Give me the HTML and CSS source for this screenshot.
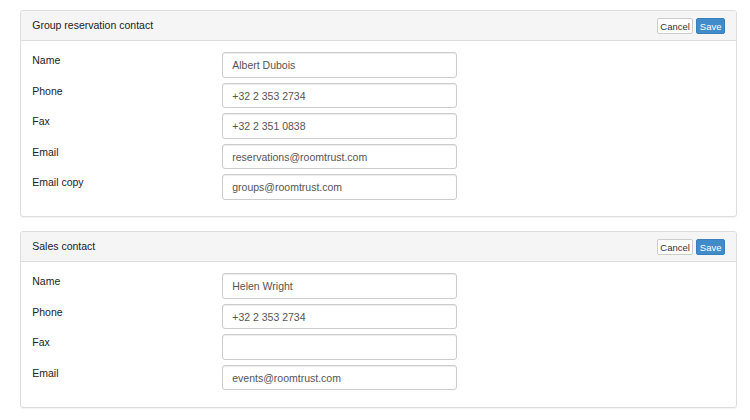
FILE: index.html
```html
<!DOCTYPE html>
<html lang="en">

<head>
    <title>Contacts</title>
    <link rel="stylesheet" href="styles.css">
</head>

<body>
    <div class="panel">
        <div class="panel-heading">
            <span class="panel-title">Group reservation contact</span>
            <div class="actions">
                <button class="btn">Cancel</button>
                <button class="btn btn-primary">Save</button>
            </div>
        </div>
        <div class="panel-body">
            <div class="row">
                <label>Name</label>
                <input type="text" value="Albert Dubois">
            </div>
            <div class="row">
                <label>Phone</label>
                <input type="text" value="+32 2 353 2734">
            </div>
            <div class="row">
                <label>Fax</label>
                <input type="text" value="+32 2 351 0838">
            </div>
            <div class="row">
                <label>Email</label>
                <input type="text" value="reservations@roomtrust.com">
            </div>
            <div class="row">
                <label>Email copy</label>
                <input type="text" value="groups@roomtrust.com">
            </div>
        </div>
    </div>

    <div class="panel">
        <div class="panel-heading">
            <span class="panel-title">Sales contact</span>
            <div class="actions">
                <button class="btn">Cancel</button>
                <button class="btn btn-primary">Save</button>
            </div>
        </div>
        <div class="panel-body">
            <div class="row">
                <label>Name</label>
                <input type="text" value="Helen Wright">
            </div>
            <div class="row">
                <label>Phone</label>
                <input type="text" value="+32 2 353 2734">
            </div>
            <div class="row">
                <label>Fax</label>
                <input type="text" value="">
            </div>
            <div class="row">
                <label>Email</label>
                <input type="text" value="events@roomtrust.com">
            </div>
        </div>
    </div>
</body>

</html>
```

FILE: styles.css
```css
body {
    margin: 10px 13px 0 20px;
    font-family: "Liberation Sans", Arial, sans-serif;
    font-size: 10.5px;
    color: #333;
    background-color: #fff;
}

.panel {
    border: 1px solid #ddd;
    border-radius: 3px;
    margin-bottom: 14px;
    box-shadow: 0 1px 1px rgba(0, 0, 0, 0.05);
}

.panel-heading {
    display: flex;
    align-items: center;
    justify-content: space-between;
    height: 29px;
    padding: 0 11px 0 11.25px;
    background-color: #f5f5f5;
    border-bottom: 1px solid #ddd;
    border-radius: 3px 3px 0 0;
}

.panel-title {
    color: #222;
    margin-top: -1px;
}

.actions {
    display: flex;
    gap: 3px;
    margin-top: 1px;
}

.btn {
    font-family: "Liberation Sans", Arial, sans-serif;
    font-size: 9.5px;
    height: 16.5px;
    line-height: 13px;
    padding: 0 2.5px;
    border: 1px solid #ccc;
    border-radius: 2px;
    background-color: #fff;
    color: #333;
}

.btn-primary {
    background-color: #428bca;
    border-color: #3a7fbd;
    color: #fff;
}

.panel-body {
    padding: 11.25px;
}

.row {
    display: flex;
    align-items: flex-start;
    margin-bottom: 5px;
}

label {
    width: 190px;
    line-height: 16px;
    color: #222;
}

input {
    box-sizing: border-box;
    width: 235px;
    height: 25.5px;
    padding: 0 9px;
    border: 1px solid #ccc;
    border-radius: 3px;
    box-shadow: inset 0 1px 1px rgba(0, 0, 0, 0.075);
    font-family: "Liberation Sans", Arial, sans-serif;
    font-size: 10.5px;
    color: #555;
}
```
